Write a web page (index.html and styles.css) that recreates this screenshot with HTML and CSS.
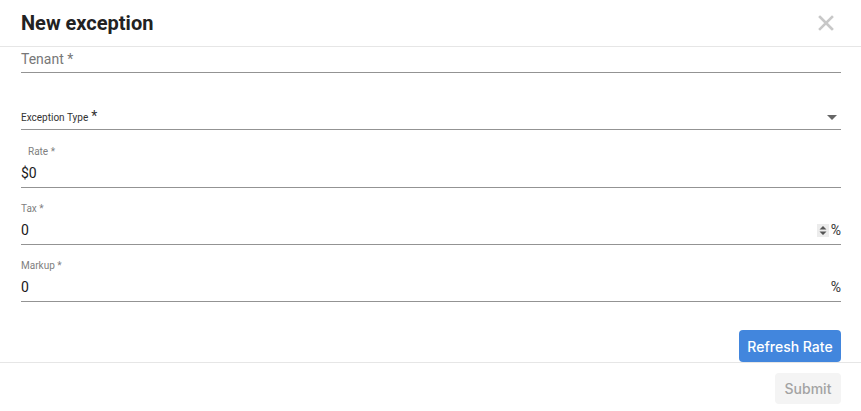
FILE: index.html
```html
<!DOCTYPE html>
<html lang="en">
<head>
  <meta charset="UTF-8">
  <title>New exception</title>
  <link rel="stylesheet" href="styles.css">
</head>
<body>
  <div class="modal">
    <div class="modal-header">
      <h2>New exception</h2>
      <button class="close-btn" aria-label="Close">
        <svg width="16" height="16" viewBox="0 0 16 16"><path d="M2 2 L14 14 M14 2 L2 14" stroke="#c8c8c8" stroke-width="2.6" stroke-linecap="square"/></svg>
      </button>
    </div>

    <div class="modal-body">
      <div class="field tenant">
        <span class="placeholder">Tenant *</span>
      </div>

      <div class="field select-field">
        <span class="select-label">Exception Type <span class="req">*</span></span>
        <span class="caret"></span>
      </div>

      <div class="field num-field rate">
        <label>Rate *</label>
        <div class="value-row"><span class="value">$0</span></div>
      </div>

      <div class="field num-field">
        <label class="flush">Tax *</label>
        <div class="value-row">
          <span class="value">0</span>
          <span class="spinner">
            <svg width="12" height="13" viewBox="0 0 12 13"><rect width="12" height="13" fill="#ececec"/><path d="M2.5 5.5 L6 2 L9.5 5.5 Z M2.5 7.5 L6 11 L9.5 7.5 Z" fill="#555"/></svg>
          </span>
          <span class="suffix">%</span>
        </div>
      </div>

      <div class="field num-field">
        <label class="flush">Markup *</label>
        <div class="value-row">
          <span class="value">0</span>
          <span class="suffix">%</span>
        </div>
      </div>

      <div class="actions">
        <button class="btn btn-primary">Refresh Rate</button>
      </div>
    </div>

    <div class="modal-footer">
      <button class="btn btn-disabled" disabled>Submit</button>
    </div>
  </div>
</body>
</html>
```

FILE: styles.css
```css
* { margin: 0; padding: 0; box-sizing: border-box; }
body {
  font-family: Roboto, "Liberation Sans", sans-serif;
  background: white;
  color: #212121;
}
.modal {
  width: 861px;
}
.modal-header {
  height: 47px;
  border-bottom: 1px solid #e6e6e6;
  display: flex;
  justify-content: space-between;
  align-items: center;
  padding: 0 27px 1px 21px;
}
.modal-header h2 {
  font-size: 20px;
  font-weight: 700;
  color: #222;
}
.close-btn {
  background: none;
  border: none;
  width: 16px;
  height: 16px;
  display: flex;
}
.modal-body {
  padding: 0 20px 0 21px;
  display: flex;
  flex-direction: column;
}
.field {
  border-bottom: 1px solid #939393;
}
.tenant {
  padding: 2px 0 3px;
  height: 26px;
}
.placeholder {
  font-size: 14px;
  line-height: 20px;
  color: #777;
}
.select-field {
  margin-top: 34px;
  height: 23px;
  padding-bottom: 2px;
  display: flex;
  justify-content: space-between;
  align-items: center;
}
.select-label {
  font-size: 10px;
  color: #333;
  display: flex;
  align-items: center;
  gap: 3px;
}
.select-label .req {
  font-size: 14px;
  line-height: 10px;
  position: relative;
  top: -1px;
}
.caret {
  width: 0;
  height: 0;
  border-left: 5px solid transparent;
  border-right: 5px solid transparent;
  border-top: 5px solid #666;
  margin-right: 4px;
}
.num-field {
  margin-top: 15px;
  padding-bottom: 4px;
}
.rate {
  margin-top: 16px;
}
.num-field label {
  display: block;
  font-size: 10px;
  line-height: 12px;
  color: #808080;
  padding-left: 7px;
  margin-bottom: 5px;
}
.num-field label.flush {
  padding-left: 0;
}
.value-row {
  display: flex;
  align-items: center;
  height: 20px;
  font-size: 14px;
}
.value {
  flex: 1;
  color: #1a1a1a;
}
.spinner {
  display: flex;
  margin-right: 2px;
}
.suffix {
  color: #333;
}
.actions {
  display: flex;
  justify-content: flex-end;
  margin-top: 28px;
}
.btn {
  font-family: Inter, "Liberation Sans", sans-serif;
  font-size: 14px;
  font-weight: 500;
  border: none;
  border-radius: 4px;
  cursor: pointer;
}
.btn-primary {
  background: #4286dd;
  color: white;
  width: 102px;
  height: 32px;
}
.modal-footer {
  border-top: 1px solid #e6e6e6;
  display: flex;
  justify-content: flex-end;
  padding: 10px 20px 0 0;
}
.btn-disabled {
  background: #f4f4f4;
  color: #a3a3a3;
  width: 66px;
  height: 31px;
  cursor: default;
}
```
